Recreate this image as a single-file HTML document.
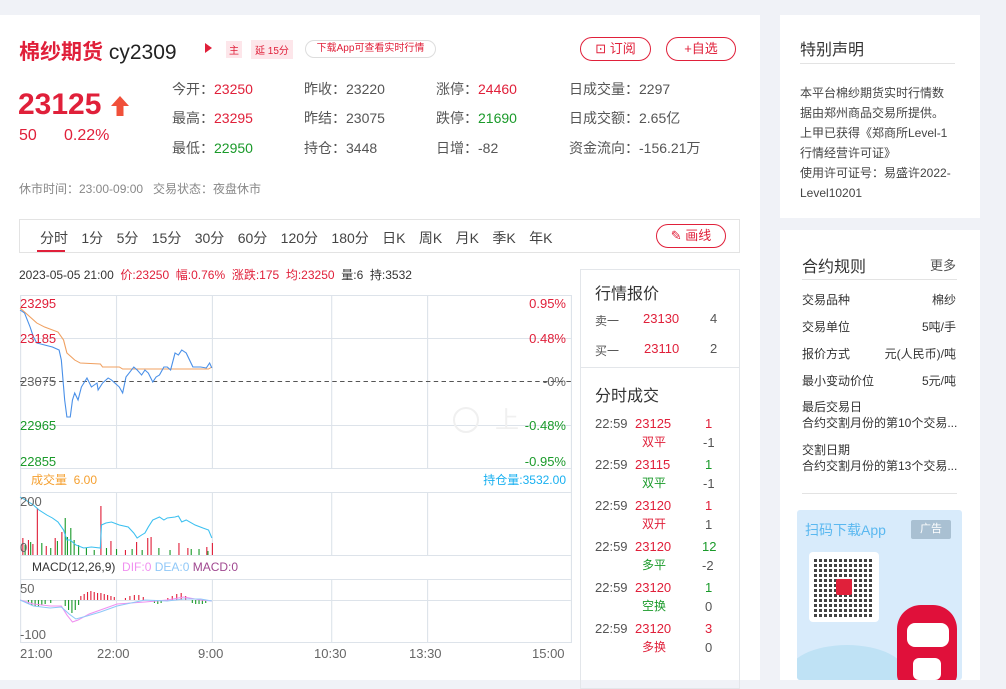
<!DOCTYPE html>
<html><head><meta charset="utf-8"><style>
*{margin:0;padding:0;box-sizing:border-box}
body{width:1006px;height:680px;overflow:hidden;background:#f0f2f7;font-family:"Liberation Sans","Noto Sans CJK SC",sans-serif;color:#333;position:relative}
.a{position:absolute;white-space:nowrap}
.r{color:#e0203a}.g{color:#1a9a2a}.gr{color:#555}
#main{position:absolute;left:0;top:15px;width:760px;height:665px;background:#fff}
.box{position:absolute;left:780px;width:200px;background:#fff}
.btn{position:absolute;border:1px solid #e0203a;border-radius:12px;color:#e0203a;font-size:13px;text-align:center}
.s{font-size:14px;color:#555}
.rt{font-size:12px;color:#333}
.tb span{margin-right:13.4px}
</style></head><body>
<div id="main"></div>
<!-- title -->
<div class="a" style="left:19px;top:36px;font-size:21px;font-weight:bold;color:#e0203a">棉纱期货 <span style="color:#222;font-weight:normal">cy2309</span></div>
<div class="a" style="left:205px;top:43px;width:0;height:0;border-left:7px solid #e0203a;border-top:5px solid transparent;border-bottom:5px solid transparent"></div>
<div class="a" style="left:226px;top:41px;font-size:10px;color:#e0203a;background:#fde6ea;padding:1px 3px">主</div>
<div class="a" style="left:251px;top:40px;font-size:10px;color:#e0203a;background:#fde6ea;padding:2px 4px">延 15分</div>
<div class="a" style="left:305px;top:40px;width:131px;height:18px;border:1px solid #ddd;border-radius:9px;font-size:10px;color:#e0203a;text-align:center;line-height:16px">下载App可查看实时行情</div>
<div class="btn" style="left:580px;top:37px;width:71px;height:24px;line-height:22px">⊡ 订阅</div>
<div class="btn" style="left:666px;top:37px;width:70px;height:24px;line-height:22px">+自选</div>
<!-- price -->
<div class="a r" style="left:18px;top:88px;font-size:30px;font-weight:bold">23125</div>
<svg class="a" style="left:110px;top:95px" width="20" height="22"><path d="M10 1 L19 11 L13.5 11 L13.5 21 L6.5 21 L6.5 11 L1 11 Z" fill="#f0503a"/></svg>
<div class="a r" style="left:19px;top:127px;font-size:16px">50</div>
<div class="a r" style="left:64px;top:127px;font-size:16px">0.22%</div>
<div class="a s" style="left:172px;top:79px">今开：<span class="r">23250</span></div>
<div class="a s" style="left:172px;top:108px">最高：<span class="r">23295</span></div>
<div class="a s" style="left:172px;top:138px">最低：<span class="g">22950</span></div>
<div class="a s" style="left:304px;top:79px">昨收：23220</div>
<div class="a s" style="left:304px;top:108px">昨结：23075</div>
<div class="a s" style="left:304px;top:138px">持仓：3448</div>
<div class="a s" style="left:436px;top:79px">涨停：<span class="r">24460</span></div>
<div class="a s" style="left:436px;top:108px">跌停：<span class="g">21690</span></div>
<div class="a s" style="left:436px;top:138px">日增：-82</div>
<div class="a s" style="left:569px;top:79px">日成交量：2297</div>
<div class="a s" style="left:569px;top:108px">日成交额：2.65亿</div>
<div class="a s" style="left:569px;top:138px">资金流向：-156.21万</div>
<div class="a" style="left:19px;top:180px;font-size:12px;color:#888">休市时间：23:00-09:00 &nbsp; 交易状态：夜盘休市</div>
<!-- tabs -->
<div class="a" style="left:19px;top:219px;width:721px;height:34px;border:1px solid #e3e3e3"></div>
<div class="a tb" style="left:40px;top:228px;font-size:14px;color:#444">
<span>分时</span><span>1分</span><span>5分</span><span>15分</span><span>30分</span><span>60分</span><span>120分</span><span>180分</span><span>日K</span><span>周K</span><span>月K</span><span>季K</span><span style="margin:0">年K</span></div>
<div class="a" style="left:37px;top:250px;width:28px;height:2px;background:#e0203a"></div>
<div class="btn" style="left:656px;top:224px;width:70px;height:24px;line-height:22px">✎ 画线</div>
<!-- info line -->
<div class="a" style="left:19px;top:266px;font-size:12px;color:#333">2023-05-05 21:00 &nbsp;<span class="r">价:23250 &nbsp;幅:0.76% &nbsp;涨跌:175 &nbsp;均:23250</span> &nbsp;量:6 &nbsp;持:3532</div>
<!-- chart -->
<svg class="a" style="left:0;top:0" width="580" height="680" font-family="Liberation Sans, Noto Sans CJK SC, sans-serif">
<g transform="scale(1.115,1)">
<g stroke="#dde3ea" stroke-width="1" fill="none">
<rect x="18.5" y="295.5" width="494" height="347"/>
<line x1="18" y1="338.5" x2="512" y2="338.5"/><line x1="18" y1="425.5" x2="512" y2="425.5"/>
<line x1="18" y1="468.5" x2="512" y2="468.5"/><line x1="18" y1="492.5" x2="512" y2="492.5"/>
<line x1="18" y1="555.5" x2="512" y2="555.5"/><line x1="18" y1="579.5" x2="512" y2="579.5"/>
<line x1="18" y1="600.5" x2="512" y2="600.5"/>
<g><line x1="104.5" y1="295" x2="104.5" y2="468"/><line x1="190.5" y1="295" x2="190.5" y2="468"/><line x1="297.5" y1="295" x2="297.5" y2="468"/><line x1="383.5" y1="295" x2="383.5" y2="468"/>
<line x1="104.5" y1="492" x2="104.5" y2="555"/><line x1="190.5" y1="492" x2="190.5" y2="555"/><line x1="297.5" y1="492" x2="297.5" y2="555"/><line x1="383.5" y1="492" x2="383.5" y2="555"/>
<line x1="104.5" y1="579" x2="104.5" y2="642"/><line x1="190.5" y1="579" x2="190.5" y2="642"/><line x1="297.5" y1="579" x2="297.5" y2="642"/><line x1="383.5" y1="579" x2="383.5" y2="642"/></g>
</g>
<line x1="18" y1="381.5" x2="512" y2="381.5" stroke="#555" stroke-dasharray="4,3"/>
<polyline fill="none" stroke="#f0a060" stroke-width="1" points="18,308 27,317 33,323 40,327 52,332 57,340 60,353 67,360 72,363 90,364 92,367 107,367 110,369 187,369 190,367"/>
<polyline fill="none" stroke="#4a90e8" stroke-width="1" points="18,310 22,313 27,327 30,337 33,343 40,345 47,347 53,350 55,360 58,400 60,417 63,417 65,400 67,393 70,400 73,387 78,378 82,387 87,383 88,390 92,383 97,378 100,380 103,383 107,387 110,393 113,377 120,367 123,370 127,375 130,370 133,373 137,382 140,377 143,375 147,367 150,367 153,370 157,353 160,355 163,350 167,353 170,360 173,367 180,367 185,368 188,363 190,368"/>
<g stroke-width="1">
<path stroke="#e0203a" d="M20.5 555V538M25.5 555V540M29.5 555V544M33.5 555V508M41.5 555V546M49.5 555V538M55.5 555V532M90.5 555V506M99.5 555V541M112.5 555V550M122.5 555V542M132.5 555V538M135.5 555V537M160.5 555V543M168.5 555V548M185.5 555V547M190.5 555V543"/>
<path stroke="#1a9a2a" d="M22.5 555V545M27.5 555V542M37.5 555V543M45.5 555V548M51.5 555V541M58.5 555V518M60.5 555V537M63.5 555V528M66.5 555V540M70.5 555V545M77.5 555V548M84.5 555V550M95.5 555V548M104.5 555V549M118.5 555V549M127.5 555V550M142.5 555V548M152.5 555V550M171.5 555V549M178.5 555V549M186.5 555V551"/>
</g>
<polyline fill="none" stroke="#3cc0f0" stroke-width="1" points="18,497 23,500 30,505 35,510 42,515 47,518 52,522 57,530 60,540 63,540 68,545 75,548 82,547 90,548 91,525 95,523 100,522 107,525 115,527 120,533 123,538 127,535 130,533 133,527 137,520 143,517 147,520 150,518 157,517 160,516 163,522 167,520 175,525 182,528 187,530 190,538"/>
<g stroke-width="1">
<path stroke="#1a9a2a" d="M25.5 600v4M28.5 600v5M31.5 600v6M34.5 600v7M37.5 600v5M40.5 600v4M45.5 600v3M58.5 600v6M61.5 600v10M64.5 600v13M67.5 600v10M70.5 600v5M138.5 600v3M141.5 600v4M144.5 600v3M172.5 600v3M175.5 600v4M178.5 600v4M181.5 600v4M184.5 600v3"/>
<path stroke="#e0203a" d="M72.5 600v-4M75.5 600v-6M78.5 600v-8M81.5 600v-9M84.5 600v-8M87.5 600v-7M90.5 600v-7M93.5 600v-6M96.5 600v-5M99.5 600v-4M102.5 600v-3M112.5 600v-2M116.5 600v-4M120.5 600v-5M124.5 600v-5M128.5 600v-3M150.5 600v-2M154.5 600v-4M158.5 600v-6M162.5 600v-7M166.5 600v-4"/>
</g>
<polyline fill="none" stroke="#f090f0" points="18,600 30,604 45,606 55,606 60,615 65,622 70,620 80,614 90,610 105,604 130,602 150,600 165,597 180,600 190,601"/>
<polyline fill="none" stroke="#90c8f8" points="18,600 30,606 45,608 55,607 62,614 68,619 78,616 90,612 105,606 130,600 150,601 165,599 180,599 190,601"/>
</g>
<circle cx="466" cy="420" r="12" fill="none" stroke="#f0f0f0" stroke-width="2"/>
<text x="495" y="428" font-size="24" fill="#f0f0f0">上</text>
<text x="20" y="308" font-size="13" fill="#e0203a">23295</text>
<text x="20" y="343" font-size="13" fill="#e0203a">23185</text>
<text x="20" y="386" font-size="13" fill="#666">23075</text>
<text x="20" y="430" font-size="13" fill="#1a9a2a">22965</text>
<text x="20" y="466" font-size="13" fill="#1a9a2a">22855</text>
<g font-size="13" text-anchor="end"><text x="566" y="308" fill="#e0203a">0.95%</text><text x="566" y="343" fill="#e0203a">0.48%</text><text x="566" y="386" fill="#666">-0%</text><text x="566" y="430" fill="#1a9a2a">-0.48%</text><text x="566" y="466" fill="#1a9a2a">-0.95%</text></g>
<text x="31" y="484" font-size="12" fill="#f5a030">成交量 &#160;6.00</text>
<text x="566" y="484" font-size="12" fill="#18b0f0" text-anchor="end">持仓量:3532.00</text>
<text x="20" y="506" font-size="13" fill="#666">200</text>
<text x="20" y="552" font-size="13" fill="#666">0</text>
<text x="32" y="571" font-size="12" fill="#333">MACD(12,26,9) <tspan fill="#f090f0">&#160;DIF:0</tspan><tspan fill="#90c8f8">&#160;DEA:0</tspan><tspan fill="#a04890">&#160;MACD:0</tspan></text>
<text x="20" y="593" font-size="13" fill="#666">50</text>
<text x="20" y="639" font-size="13" fill="#666">-100</text>
<g font-size="13" fill="#666"><text x="20" y="658">21:00</text><text x="97" y="658">22:00</text><text x="198" y="658">9:00</text><text x="314" y="658">10:30</text><text x="409" y="658">13:30</text><text x="532" y="658">15:00</text></g>
</svg>
<!-- quote panel -->
<div class="a" style="left:580px;top:269px;width:160px;height:420px;border:1px solid #e3e6ea"></div>
<div class="a" style="left:581px;top:367px;width:158px;height:1px;background:#e3e6ea"></div>
<div class="a" style="left:595px;top:280px;font-size:16px;color:#333">行情报价</div>
<div class="a" style="left:595px;top:312px;font-size:12px;color:#555">卖一</div><div class="a r" style="left:643px;top:311px;font-size:13px">23130</div><div class="a gr" style="left:710px;top:311px;font-size:13px">4</div>
<div class="a" style="left:595px;top:342px;font-size:12px;color:#555">买一</div><div class="a r" style="left:644px;top:341px;font-size:13px">23110</div><div class="a gr" style="left:710px;top:341px;font-size:13px">2</div>
<div class="a" style="left:595px;top:382px;font-size:16px;color:#333">分时成交</div>
<div class="a" style="left:595px;top:414px;font-size:13px;line-height:19px;width:130px">
<div style="position:relative;height:41px"><span class="gr">22:59</span><span class="r" style="position:absolute;left:40px">23125</span><span class="r" style="position:absolute;left:110px">1</span><div class="r" style="position:absolute;left:47px;top:19px;font-size:12px">双平</div><div class="gr" style="position:absolute;left:108px;top:19px">-1</div></div>
<div style="position:relative;height:41px"><span class="gr">22:59</span><span class="r" style="position:absolute;left:40px">23115</span><span class="g" style="position:absolute;left:110px">1</span><div class="g" style="position:absolute;left:47px;top:19px;font-size:12px">双平</div><div class="gr" style="position:absolute;left:108px;top:19px">-1</div></div>
<div style="position:relative;height:41px"><span class="gr">22:59</span><span class="r" style="position:absolute;left:40px">23120</span><span class="r" style="position:absolute;left:110px">1</span><div class="r" style="position:absolute;left:47px;top:19px;font-size:12px">双开</div><div class="gr" style="position:absolute;left:110px;top:19px">1</div></div>
<div style="position:relative;height:41px"><span class="gr">22:59</span><span class="r" style="position:absolute;left:40px">23120</span><span class="g" style="position:absolute;left:107px">12</span><div class="g" style="position:absolute;left:47px;top:19px;font-size:12px">多平</div><div class="gr" style="position:absolute;left:107px;top:19px">-2</div></div>
<div style="position:relative;height:41px"><span class="gr">22:59</span><span class="r" style="position:absolute;left:40px">23120</span><span class="g" style="position:absolute;left:110px">1</span><div class="g" style="position:absolute;left:47px;top:19px;font-size:12px">空换</div><div class="gr" style="position:absolute;left:110px;top:19px">0</div></div>
<div style="position:relative;height:41px"><span class="gr">22:59</span><span class="r" style="position:absolute;left:40px">23120</span><span class="r" style="position:absolute;left:110px">3</span><div class="r" style="position:absolute;left:47px;top:19px;font-size:12px">多换</div><div class="gr" style="position:absolute;left:110px;top:19px">0</div></div>
</div>
<!-- right col -->
<div class="box" style="top:15px;height:203px"></div>
<div class="a" style="left:800px;top:36px;font-size:16px;color:#333">特别声明</div>
<div class="a" style="left:800px;top:63px;width:155px;height:1px;background:#e3e3e3"></div>
<div class="a" style="left:800px;top:83px;font-size:12px;line-height:20px;color:#444">本平台棉纱期货实时行情数<br>据由郑州商品交易所提供。<br>上甲已获得《郑商所Level-1<br>行情经营许可证》<br>使用许可证号：易盛许2022-<br>Level10201</div>
<div class="box" style="top:230px;height:450px"></div>
<div class="a" style="left:802px;top:253px;font-size:16px;color:#333">合约规则</div>
<div class="a" style="left:930px;top:255px;font-size:13px;color:#555">更多</div>
<div class="a" style="left:802px;top:279px;width:155px;height:1px;background:#e3e3e3"></div>
<div class="a rt" style="left:802px;top:291px">交易品种</div><div class="a rt" style="left:802px;top:318px">交易单位</div><div class="a rt" style="left:802px;top:345px">报价方式</div><div class="a rt" style="left:802px;top:372px">最小变动价位</div>
<div class="a rt" style="right:50px;top:291px">棉纱</div><div class="a rt" style="right:50px;top:318px">5吨/手</div><div class="a rt" style="right:50px;top:345px">元(人民币)/吨</div><div class="a rt" style="right:50px;top:372px">5元/吨</div>
<div class="a rt" style="left:802px;top:399px;line-height:16px">最后交易日<br>合约交割月份的第10个交易...</div>
<div class="a rt" style="left:802px;top:442px;line-height:16px">交割日期<br>合约交割月份的第13个交易...</div>
<div class="a" style="left:802px;top:493px;width:155px;height:1px;background:#e3e3e3"></div>
<!-- ad -->
<div class="a" style="left:797px;top:510px;width:165px;height:170px;background:#d8ebfb;border-radius:3px;overflow:hidden">
<div class="a" style="left:8px;top:10px;font-size:14px;color:#5ab8f0">扫码下载App</div>
<div class="a" style="left:114px;top:10px;width:40px;height:19px;background:#a9c0d2;color:#fff;font-size:11px;text-align:center;line-height:19px;border-radius:2px">广告</div>
<div class="a" style="left:12px;top:42px;width:70px;height:70px;background:#fff;border-radius:4px"></div>
<div class="a" style="left:17px;top:47px;width:60px;height:60px;background:repeating-linear-gradient(90deg,#222 0 3px,#fff 3px 5px),#222;opacity:.85"></div>
<div class="a" style="left:17px;top:47px;width:60px;height:60px;background:repeating-linear-gradient(0deg,transparent 0 3px,#fff 3px 5px)"></div>
<div class="a" style="left:39px;top:69px;width:16px;height:16px;background:#e0203a;border-radius:2px"></div>
<div class="a" style="left:-10px;top:135px;width:120px;height:60px;background:#bfe2f5;border-radius:50%"></div>
<div class="a" style="left:100px;top:95px;width:60px;height:80px;background:#e0103a;border-radius:24px 24px 10px 10px"></div>
<div class="a" style="left:110px;top:113px;width:42px;height:24px;background:#fff;border-radius:8px"></div>
<div class="a" style="left:116px;top:148px;width:28px;height:22px;background:#fff;border-radius:6px"></div>
</div>
</body></html>
